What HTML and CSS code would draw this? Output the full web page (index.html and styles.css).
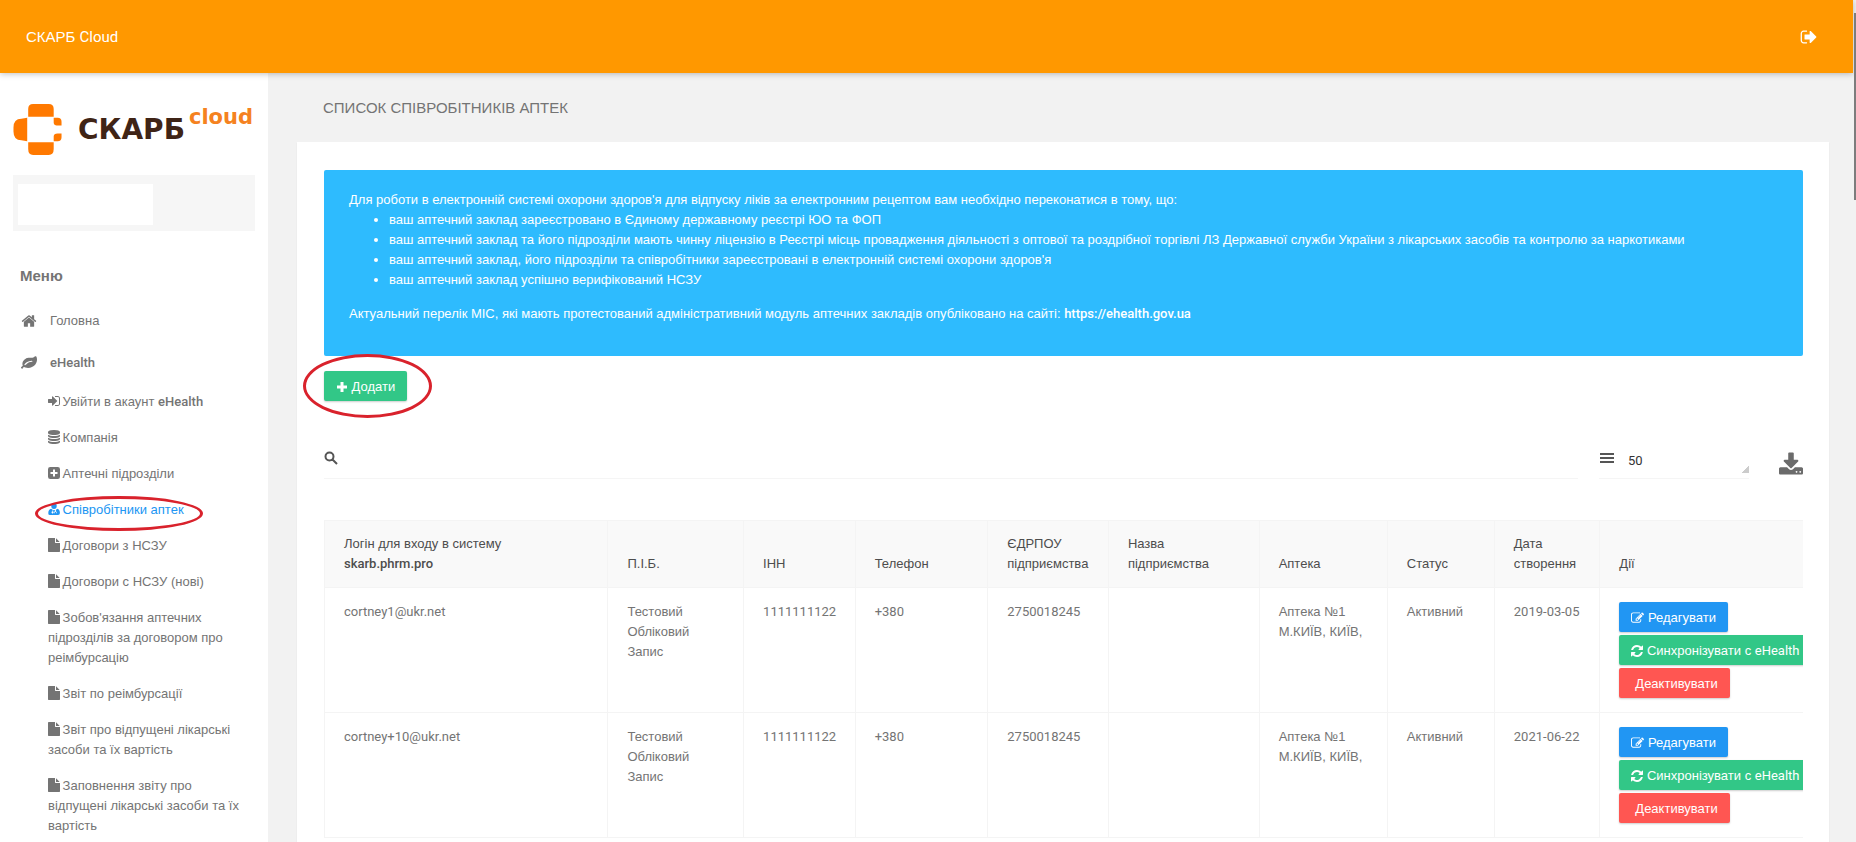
FILE: index.html
```
<!DOCTYPE html>
<html lang="uk">
<head>
    <meta charset="UTF-8">
    <meta name="viewport" content="width=device-width, initial-scale=1.0">
    <title>СКАРБ Cloud</title>
    <link rel="stylesheet" href="styles.css">
</head>
<body>
    <svg class="sprite" aria-hidden="true">
        <symbol id="i-sign-out" viewBox="0 0 1792 1792"><path d="M704 1440q0 4 1 20t.5 26.5-3 23.5-10 19.5-20.5 6.5h-320q-119 0-203.5-84.5t-84.5-203.5v-704q0-119 84.5-203.5t203.5-84.5h320q13 0 22.5 9.5t9.5 22.5q0 4 1 20t.5 26.5-3 23.5-10 19.5-20.5 6.5h-320q-66 0-113 47t-47 113v704q0 66 47 113t113 47h312l11.5 1 11.5 3 8 5.5 7 9 2 13.5zm928-544q0 26-19 45l-544 544q-19 19-45 19t-45-19-19-45v-288h-448q-26 0-45-19t-19-45v-384q0-26 19-45t45-19h448v-288q0-26 19-45t45-19 45 19l544 544q19 19 19 45z"/></symbol>
        <symbol id="i-home" viewBox="0 0 1792 1792"><path d="M1472 992v480q0 26-19 45t-45 19h-384v-384h-256v384h-384q-26 0-45-19t-19-45v-480q0-1 .5-3t.5-3l575-474 575 474q1 2 1 6zm223-69l-62 74q-8 9-21 11h-3q-13 0-21-7l-692-577-692 577q-12 8-24 7-13-2-21-11l-62-74q-8-10-7-23.5t11-21.5l719-599q32-26 76-26t76 26l244 204v-195q0-14 9-23t23-9h192q14 0 23 9t9 23v408l219 182q10 8 11 21.5t-7 23.5z"/></symbol>
        <symbol id="i-leaf" viewBox="0 0 1792 1792"><path d="M1280 704q0-26-19-45t-45-19q-172 0-318 49.5t-259.5 134-235.5 219.5q-19 21-19 45 0 26 19 45t45 19q24 0 45-19 27-24 74-71t67-66q137-124 268.5-176t313.5-52q26 0 45-19t19-45zm512-198q0 95-20 193-46 224-184.5 383t-357.5 268q-214 108-438 108-148 0-286-47-15-5-88-42t-96-37q-16 0-39.5 32t-45 70-52.5 70-60 32q-43 0-63.5-17.5t-45.5-59.5q-2-4-6-11t-5.5-10-3-9.5-1.5-13.5q0-35 31-73.5t68-65.5 68-56 31-48q0-4-14-38t-16-44q-9-51-9-104 0-115 43.5-220t119-184.5 170.5-139 204-95.5q55-18 145-25.5t179.5-9 178.5-6 163.5-24 113.5-56.5l29.5-29.5 29.5-28 27-20 36.5-16 43.5-4.5q39 0 70.5 46t47.5 112 24 124 8 96z"/></symbol>
        <symbol id="i-sign-in" viewBox="128 0 1536 1792"><path d="M1312 896q0 26-19 45l-544 544q-19 19-45 19t-45-19-19-45v-288h-448q-26 0-45-19t-19-45v-384q0-26 19-45t45-19h448v-288q0-26 19-45t45-19 45 19l544 544q19 19 19 45zm352-352v704q0 119-84.5 203.5t-203.5 84.5h-320q-13 0-22.5-9.5t-9.5-22.5q0-4-1-20t-.5-26.5 3-23.5 10-19.5 20.5-6.5h320q66 0 113-47t47-113v-704q0-66-47-113t-113-47h-312l-11.5-1-11.5-3-8-5.5-7-9-2-13.5q0-4-1-20t-.5-26.5 3-23.5 10-19.5 20.5-6.5h320q119 0 203.5 84.5t84.5 203.5z"/></symbol>
        <symbol id="i-database" viewBox="128 0 1536 1792"><path d="M896 768q237 0 443-43t325-127v170q0 69-103 128t-280 93.500-385 34.500-385-34.500-280-93.500-103-128v-170q119 84 325 127t443 43zm0 768q237 0 443-43t325-127v170q0 69-103 128t-280 93.500-385 34.500-385-34.500-280-93.500-103-128v-170q119 84 325 127t443 43zm0-384q237 0 443-43t325-127v170q0 69-103 128t-280 93.500-385 34.500-385-34.500-280-93.500-103-128v-170q119 84 325 127t443 43zm0-1152q208 0 385 34.500t280 93.500 103 128v128q0 69-103 128t-280 93.500-385 34.500-385-34.500-280-93.500-103-128v-128q0-69 103-128t280-93.500 385-34.500z"/></symbol>
        <symbol id="i-plus-square" viewBox="128 0 1536 1792"><path fill-rule="evenodd" d="M416 128h960q288 0 288 288v960q0 288-288 288h-960q-288 0-288-288v-960q0-288 288-288zM768 448v320h-320v256h320v320h256v-320h320v-256h-320v-320z"/></symbol>
        <symbol id="i-user-md" viewBox="128 0 1536 1792"><path fill-rule="evenodd" d="M896 128a350 384 0 0 1 0 768a350 384 0 0 1 0-768zM540 850q70 90 180 130v150q0 60-60 80a130 130 0 1 0 110 0q0-40 20-80v-120q106 24 212 0v170q-90 40-90 130v120h80v-110q0-60 80-60t80 60v110h80v-120q0-90-90-130v-200q110-40 180-130q330 110 330 560q0 260-240 260h-1030q-220 0-220-240q0-480 378-580z"/></symbol>
        <symbol id="i-file" viewBox="128 0 1536 1792"><path d="M1152 512v-472q22 14 36 28l408 408q14 14 28 36h-472zm-128 32q0 40 28 68t68 28h544v1056q0 40-28 68t-68 28h-1344q-40 0-68-28t-28-68v-1600q0-40 28-68t68-28h800v544z"/></symbol>
        <symbol id="i-plus" viewBox="0 0 12 12"><path d="M4.500 1h3v3.500H11v3H7.500V11h-3V7.500H1v-3h3.500z"/></symbol>
        <symbol id="i-search" viewBox="0 0 14 14"><path fill="none" stroke="currentColor" stroke-width="2" d="M5.500 1.500a4 4 0 1 0 0 8a4 4 0 0 0 0-8zM8.500 8.500l4.500 4.500"/></symbol>
        <symbol id="i-lines" viewBox="0 0 16 12"><path d="M1 1h14v2H1zM1 5h14v2H1zM1 9h14v2H1z"/></symbol>
        <symbol id="i-download" viewBox="64 0 1664 1600"><path d="M1344 1344q0-26-19-45t-45-19-45 19-19 45 19 45 45 19 45-19 19-45zm256 0q0-26-19-45t-45-19-45 19-19 45 19 45 45 19 45-19 19-45zm128-224v320q0 40-28 68t-68 28h-1472q-40 0-68-28t-28-68v-320q0-40 28-68t68-28h465l135 136q58 56 136 56t136-56l136-136h464q40 0 68 28t28 68zm-325-569q17 41-14 70l-448 448q-18 19-45 19t-45-19l-448-448q-31-29-14-70 17-39 59-39h256v-448q0-26 19-45t45-19h256q26 0 45 19t19 45v448h256q42 0 59 39z"/></symbol>
        <symbol id="i-edit" viewBox="0 0 1792 1792"><path d="M888 1184l116-116-152-152-116 116v56h96v96h56zm440-720q-16-16-33 1l-350 350q-17 17-1 33t33-1l350-350q17-17 1-33zm80 594v190q0 119-84.500 203.500t-203.500 84.500h-832q-119 0-203.500-84.500t-84.500-203.500v-832q0-119 84.500-203.500t203.500-84.500h832q63 0 117 25 15 7 18 23 3 17-9 29l-49 49q-14 14-32 8-23-6-45-6h-832q-66 0-113 47t-47 113v832q0 66 47 113t113 47h832q66 0 113-47t47-113v-126q0-13 9-22l64-64q15-15 35-7t20 29zm-96-738l288 288-672 672h-288v-288zm444 132l-92 92-288-288 92-92q28-28 68-28t68 28l152 152q28 28 28 68t-28 68z"/></symbol>
        <symbol id="i-refresh" viewBox="128 0 1536 1792"><path d="M1639 1056q0 5-1 7-64 268-268 434.500t-478 166.500q-146 0-282.500-55t-243.500-157l-129 129q-19 19-45 19t-45-19-19-45v-448q0-26 19-45t45-19h448q26 0 45 19t19 45-19 45l-137 137q71 66 161 102t187 36q134 0 250-65t186-179q11-17 53-117 8-23 30-23h192q13 0 22.500 9.500t9.500 22.500zm25-800v448q0 26-19 45t-45 19h-448q-26 0-45-19t-19-45 19-45l138-138q-148-137-349-137-134 0-250 65t-186 179q-11 17-53 117-8 23-30 23h-199q-13 0-22.500-9.500t-9.500-22.500v-7q65-268 270-434.500t480-166.500q146 0 284 55.500t245 156.500l130-129q19-19 45-19t45 19 19 45z"/></symbol>
    </svg>

    <header class="header">
        <a class="brand" href="#">СКАРБ <span class="lat">Cloud</span></a>
        <a class="logout" href="#" aria-label="Вийти"><svg class="icon"><use href="#i-sign-out"/></svg></a>
    </header>

    <div class="layout">
        <aside class="sidebar">
            <a class="logo" href="#">
                <svg class="logo-mark" viewBox="0 0 50 52">
                    <path fill="#ff7900" d="M20 0h16q5 0 5 5v8H15V5q0-5 5-5zM0 24q0-9 8-9l6-1v24l-6-1q-8 0-8-9zM15 39h26v7q0 6-5 6H20q-5 0-5-6zM41 14h4q4 0 4 4v4h-3q-5 0-5-3zM49 30v4q0 4-4 4h-4v-5q0-3 4-3z"/>
                </svg>
                <span class="logo-name">СКАРБ</span>
                <span class="logo-cloud">cloud</span>
            </a>
            <div class="user"><div class="user-name"></div></div>

            <h2 class="menu-title">Меню</h2>
            <nav>
                <ul class="menu">
                    <li><a href="#"><svg class="icon"><use href="#i-home"/></svg>Головна</a></li>
                    <li><a href="#"><svg class="icon"><use href="#i-leaf"/></svg><span class="lat">eHealth</span></a></li>
                </ul>
                <ul class="submenu">
                    <li><a href="#"><svg class="icon"><use href="#i-sign-in"/></svg> Увійти в акаунт <span class="lat">eHealth</span></a></li>
                    <li><a href="#"><svg class="icon"><use href="#i-database"/></svg> Компанія</a></li>
                    <li><a href="#"><svg class="icon"><use href="#i-plus-square"/></svg> Аптечні підрозділи</a></li>
                    <li class="active"><a href="#"><svg class="icon"><use href="#i-user-md"/></svg> Співробітники аптек</a></li>
                    <li><a href="#"><svg class="icon"><use href="#i-file"/></svg> Договори з НСЗУ</a></li>
                    <li><a href="#"><svg class="icon"><use href="#i-file"/></svg> Договори с НСЗУ (нові)</a></li>
                    <li><a href="#"><svg class="icon"><use href="#i-file"/></svg> Зобов'язання аптечних підрозділів за договором про реімбурсацію</a></li>
                    <li><a href="#"><svg class="icon"><use href="#i-file"/></svg> Звіт по реімбурсації</a></li>
                    <li><a href="#"><svg class="icon"><use href="#i-file"/></svg> Звіт про відпущені лікарські засоби та їх вартість</a></li>
                    <li><a href="#"><svg class="icon"><use href="#i-file"/></svg> Заповнення звіту про відпущені лікарські засоби та їх вартість</a></li>
                </ul>
            </nav>
        </aside>

        <main class="content">
            <h1>Список співробітників аптек</h1>
            <section class="card">
                <div class="alert">
                    <p>Для роботи в електронній системі охорони здоров'я для відпуску ліків за електронним рецептом вам необхідно переконатися в тому, що:</p>
                    <ul>
                        <li>ваш аптечний заклад зареєстровано в Єдиному державному реєстрі ЮО та ФОП</li>
                        <li>ваш аптечний заклад та його підрозділи мають чинну ліцензію в Реєстрі місць провадження діяльності з оптової та роздрібної торгівлі ЛЗ Державної служби України з лікарських засобів та контролю за наркотиками</li>
                        <li>ваш аптечний заклад, його підрозділи та співробітники зареєстровані в електронній системі охорони здоров'я</li>
                        <li>ваш аптечний заклад успішно верифікований НСЗУ</li>
                    </ul>
                    <p>Актуальний перелік МІС, які мають протестований адміністративний модуль аптечних закладів опубліковано на сайті: <a class="lat" href="#">https://ehealth.gov.ua</a></p>
                </div>

                <div class="actions">
                    <button class="btn btn-success" type="button"><svg class="icon"><use href="#i-plus"/></svg> Додати</button>
                </div>

                <div class="toolbar">
                    <div class="search">
                        <label for="search" aria-label="Пошук"><svg class="icon"><use href="#i-search"/></svg></label>
                        <input type="text" id="search">
                    </div>
                    <div class="length">
                        <label for="length" aria-label="Кількість рядків"><svg class="icon"><use href="#i-lines"/></svg></label>
                        <select id="length">
                            <option>10</option>
                            <option>25</option>
                            <option selected>50</option>
                        </select>
                    </div>
                    <button class="download" type="button" aria-label="Завантажити"><svg class="icon"><use href="#i-download"/></svg></button>
                </div>

                <div class="table-wrap">
                    <table>
                        <thead>
                            <tr>
                                <th class="col-login">Логін для входу в систему <span class="lat">skarb.phrm.pro</span></th>
                                <th class="col-name">П.І.Б.</th>
                                <th class="col-inn">ІНН</th>
                                <th class="col-phone">Телефон</th>
                                <th class="col-code">ЄДРПОУ підприємства</th>
                                <th class="col-company">Назва<br>підприємства</th>
                                <th class="col-pharmacy">Аптека</th>
                                <th class="col-status">Статус</th>
                                <th class="col-date">Дата створення</th>
                                <th>Дії</th>
                            </tr>
                        </thead>
                        <tbody>
                            <tr>
                                <td class="num">cortney1@ukr.net</td>
                                <td>Тестовий<br>Обліковий<br>Запис</td>
                                <td class="num">1111111122</td>
                                <td class="num">+380</td>
                                <td class="num">2750018245</td>
                                <td></td>
                                <td>Аптека №1<br>М.КИЇВ, КИЇВ,</td>
                                <td>Активний</td>
                                <td class="num">2019-03-05</td>
                                <td>
                                    <div class="row-actions">
                                        <button class="btn btn-primary" type="button"><svg class="icon"><use href="#i-edit"/></svg> Редагувати</button>
                                        <button class="btn btn-success" type="button"><svg class="icon"><use href="#i-refresh"/></svg> Синхронізувати с <span class="num">eHealth</span></button>
                                        <button class="btn btn-danger" type="button">Деактивувати</button>
                                    </div>
                                </td>
                            </tr>
                            <tr>
                                <td class="num">cortney+10@ukr.net</td>
                                <td>Тестовий<br>Обліковий<br>Запис</td>
                                <td class="num">1111111122</td>
                                <td class="num">+380</td>
                                <td class="num">2750018245</td>
                                <td></td>
                                <td>Аптека №1<br>М.КИЇВ, КИЇВ,</td>
                                <td>Активний</td>
                                <td class="num">2021-06-22</td>
                                <td>
                                    <div class="row-actions">
                                        <button class="btn btn-primary" type="button"><svg class="icon"><use href="#i-edit"/></svg> Редагувати</button>
                                        <button class="btn btn-success" type="button"><svg class="icon"><use href="#i-refresh"/></svg> Синхронізувати с <span class="num">eHealth</span></button>
                                        <button class="btn btn-danger" type="button">Деактивувати</button>
                                    </div>
                                </td>
                            </tr>
                        </tbody>
                    </table>
                </div>
            </section>
        </main>
    </div>
    <div class="scroll-thumb"></div>
</body>
</html>
```
FILE: styles.css
```
*, *::before, *::after {
    box-sizing: border-box;
}

body {
    margin: 0;
    height: 100vh;
    overflow: hidden;
    display: flex;
    flex-direction: column;
    position: relative;
    background-color: #f2f2f2;
    color: #747474;
    font-family: "Liberation Sans", Arial, sans-serif;
    font-size: 13px;
    line-height: 20px;
}

a {
    color: inherit;
    text-decoration: none;
}

ul {
    margin: 0;
    padding: 0;
    list-style: none;
}

button, input, select {
    font-family: inherit;
    font-size: 13px;
}

.sprite {
    display: none;
}

.icon {
    fill: currentColor;
    width: 12px;
    height: 14px;
}

.lat {
    font-family: Roboto, sans-serif;
    font-weight: 500;
}

.num {
    font-family: Roboto, sans-serif;
}

/* header */
.header {
    display: flex;
    align-items: center;
    justify-content: space-between;
    flex: none;
    height: 73px;
    margin-right: 3px;
    padding: 0 35px 0 26px;
    background-color: #ff9800;
    color: #fff;
    font-size: 15px;
    box-shadow: 0 1px 6px rgba(0, 0, 0, 0.25);
    z-index: 1;
}

.header .lat {
    font-weight: 400;
}

.logout .icon {
    display: block;
    width: 18px;
    height: 18px;
}

.layout {
    display: flex;
    flex: 1;
    min-height: 0;
}

/* sidebar */
.sidebar {
    flex: none;
    width: 268px;
    padding: 31px 13px 0;
    background-color: #fff;
}

.logo {
    display: flex;
    align-items: center;
    height: 51px;
}

.logo-mark {
    width: 50px;
    height: 51px;
    margin-right: 15px;
}

.logo-name, .logo-cloud {
    font-family: "DejaVu Sans", sans-serif;
    font-weight: bold;
}

.logo-name {
    color: #3f2416;
    font-size: 28px;
}

.logo-cloud {
    align-self: flex-start;
    margin: 3px 0 0 4px;
    color: #f58220;
    font-size: 21px;
}

.user {
    margin-top: 20px;
    padding: 9px 5px 6px;
    background-color: #f6f6f6;
}

.user-name {
    width: 135px;
    height: 41px;
    background-color: #fff;
}

.menu-title {
    margin: 35px 0 24px 7px;
    font-size: 15px;
    line-height: 20px;
}

.menu a {
    display: flex;
    align-items: center;
    gap: 13px;
    padding: 0 8px;
    line-height: 22px;
    margin-bottom: 20px;
}

.menu li:last-child a {
    margin-bottom: 18px;
}

.menu .icon {
    width: 16px;
    height: 16px;
}

.submenu {
    padding: 0 12px 0 35px;
}

.submenu li {
    position: relative;
    margin-bottom: 16px;
}

.submenu .icon {
    margin-right: -1px;
    vertical-align: -2px;
}

.submenu .active {
    color: #2196f3;
}

/* red marks around the active item and the add button */
.active::after, .actions::after {
    content: "";
    position: absolute;
    border: 3px solid #d9222c;
    border-radius: 50%;
    pointer-events: none;
}

.active::after {
    left: -13px;
    top: -4px;
    width: 168px;
    height: 35px;
}

.actions::after {
    left: -21px;
    top: -17px;
    width: 129px;
    height: 64px;
}

/* content */
.content {
    flex: 1;
    min-width: 0;
    display: flex;
    flex-direction: column;
    padding: 25px 27px 0 29px;
}

h1 {
    margin: 0 0 24px 26px;
    font-size: 15px;
    font-weight: 400;
    line-height: 20px;
    text-transform: uppercase;
}

.card {
    flex: 1;
    padding: 28px 26px 0 27px;
    background-color: #fff;
    box-shadow: 0 1px 1px rgba(0, 0, 0, 0.1);
}

.alert {
    padding: 20px 25px 32px;
    border-radius: 2px;
    background-color: #2ebbfe;
    color: #fff;
}

.alert p {
    margin: 0;
}

.alert ul {
    margin-bottom: 14px;
    padding-left: 40px;
    list-style: disc;
}

.actions {
    position: relative;
    display: flex;
    margin-top: 15px;
}

.btn {
    height: 30px;
    padding: 0 12px;
    border: none;
    border-radius: 2px;
    color: #fff;
    white-space: nowrap;
    cursor: pointer;
    box-shadow: 0 1px 2px rgba(0, 0, 0, 0.2);
}

.btn .icon {
    vertical-align: -3px;
}

.btn-primary {
    background-color: #2196f3;
}

.btn-primary .icon {
    width: 13px;
}

.btn-success {
    background-color: #32c787;
}

.btn-danger {
    padding: 0 12px 0 16px;
    background-color: #ff5652;
}

.toolbar {
    display: flex;
    align-items: center;
    margin-top: 36px;
    height: 42px;
}

.search, .length {
    display: flex;
    align-items: center;
    height: 42px;
    border-bottom: 1px solid #f5f5f5;
    color: #555;
}

.search {
    flex: 1;
}

.search .icon {
    display: block;
    width: 14px;
    height: 14px;
}

.search input {
    flex: 1;
    border: none;
    outline: none;
    background: none;
}

.length {
    width: 150px;
    margin: 0 30px 0 21px;
}

.length .icon {
    display: block;
    width: 16px;
    height: 12px;
}

.length select {
    flex: 1;
    height: 30px;
    padding: 5px 13px 0;
    border: none;
    appearance: none;
    background: linear-gradient(135deg, transparent 50%, #ccc 50%) right bottom / 7px 7px no-repeat;
    color: #333;
    font-family: Roboto, sans-serif;
}

.download {
    align-self: flex-end;
    padding: 0 0 3px;
    border: none;
    background: none;
    color: #6b6b6b;
    cursor: pointer;
}

.download .icon {
    display: block;
    width: 24px;
    height: 24px;
}

/* table */
.table-wrap {
    margin-top: 41px;
    overflow: hidden;
}

table {
    width: 102%;
    table-layout: fixed;
    border-collapse: collapse;
}

th, td {
    border: 1px solid #f4f4f4;
    padding: 14px 12px 14px 19px;
    text-align: left;
    vertical-align: top;
}

th {
    padding: 13px 8px 13px 19px;
    background-color: #f9f9f9;
    color: #4d4d4d;
    font-weight: 400;
    vertical-align: bottom;
}

.col-login {
    width: 18.8%;
    padding-right: 100px;
}

.col-name {
    width: 9%;
}

.col-inn {
    width: 7.4%;
}

.col-phone {
    width: 8.8%;
}

.col-code {
    width: 8%;
}

.col-company {
    width: 10%;
}

.col-pharmacy {
    width: 8.5%;
}

.col-status {
    width: 7.1%;
}

.col-date {
    width: 7%;
}

.row-actions {
    display: flex;
    flex-direction: column;
    align-items: flex-start;
    gap: 3px;
}

/* page scrollbar */
.scroll-thumb {
    position: absolute;
    z-index: 2;
    top: 13px;
    right: 0;
    width: 2px;
    height: 187px;
    background-color: #7d7d7d;
}
```
